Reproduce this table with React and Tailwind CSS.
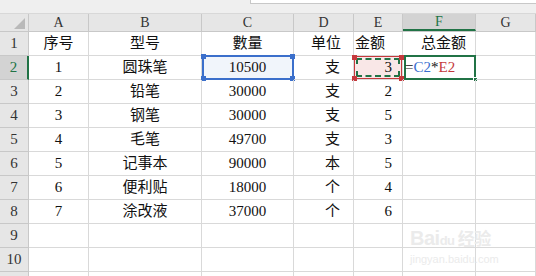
import React from "react";

const cols = [
  { key: "A", w: "w-[60px]" },
  { key: "B", w: "w-[113px]" },
  { key: "C", w: "w-[92px]" },
  { key: "D", w: "w-[60px]" },
  { key: "E", w: "w-[49px]" },
  { key: "F", w: "w-[73px]" },
  { key: "G", w: "flex-1" },
];

const rows = [
  ["序号", "型号", "數量", "单位", "金额", "总金额"],
  ["1", "圆珠笔", "10500", "支", "3", ""],
  ["2", "铅笔", "30000", "支", "2", ""],
  ["3", "钢笔", "30000", "支", "5", ""],
  ["4", "毛笔", "49700", "支", "3", ""],
  ["5", "记事本", "90000", "本", "5", ""],
  ["6", "便利贴", "18000", "个", "4", ""],
  ["7", "涂改液", "37000", "个", "6", ""],
  ["", "", "", "", "", ""],
  ["", "", "", "", "", ""],
  ["", "", "", "", "", ""],
];

// alignment per column, header row is different for D/E/F
const bodyAlign = [
  "justify-center",
  "justify-center",
  "justify-center",
  "justify-end pr-[13px]",
  "justify-end pr-[10px]",
  "justify-start pl-[2px]",
  "",
];
const headAlign = [
  "justify-center",
  "justify-center",
  "justify-center",
  "justify-center pl-[5px]",
  "justify-start pl-[1px]",
  "justify-start pl-[18px]",
  "",
];

const Corner = ({ className }) => (
  <span className={`absolute w-[5px] h-[5px] ${className}`} />
);

const Overlay = ({ col }) => {
  if (col === "C")
    return (
      <div className="absolute -top-[1px] left-0 -right-[1px] -bottom-[1px] border-2 border-[#3b6fcb] bg-[#e8eef9]/60 pointer-events-none">
        <Corner className="-top-[3px] -left-[3px] bg-[#3b6fcb]" />
        <Corner className="-top-[3px] -right-[3px] bg-[#3b6fcb]" />
        <Corner className="-bottom-[3px] -left-[3px] bg-[#3b6fcb]" />
        <Corner className="-bottom-[3px] -right-[3px] bg-[#3b6fcb]" />
      </div>
    );
  if (col === "E")
    return (
      <div className="absolute inset-0 border border-[#c5393d] bg-[#f9e7e7] pointer-events-none">
        <div className="absolute inset-[1px] border-2 border-dashed border-[#217346]" />
        <Corner className="-top-[2px] -left-[3px] bg-[#c5393d]" />
        <Corner className="-top-[2px] -right-[3px] bg-[#c5393d]" />
        <Corner className="-bottom-[3px] -left-[3px] bg-[#c5393d]" />
        <Corner className="-bottom-[3px] -right-[3px] bg-[#c5393d]" />
      </div>
    );
  if (col === "F")
    return (
      <div className="absolute -top-[1px] left-[1px] -right-[1px] -bottom-[1px] border-2 border-[#217346] pointer-events-none">
        <span className="absolute -bottom-[4px] -right-[4px] w-[5px] h-[5px] bg-[#217346] border border-white" />
      </div>
    );
  return null;
};

export default function App() {
  return (
    <div className="w-[536px] h-[276px] overflow-hidden bg-white font-['Liberation_Serif','Noto_Sans_CJK_SC',serif] text-[#111] relative">
      {/* strip under the formula bar */}
      <div className="h-[14px] bg-[#efefef] border-b border-[#d8d8d8] flex">
        <div className="w-[250px]" />
        <div className="flex-1 h-[4px] bg-white border-l border-b border-[#c8c8c8]" />
      </div>

      {/* column headers */}
      <div className="flex h-[18px] bg-[#e6e6e6] border-b border-[#c8c8c8] text-[14px] text-[#333]">
        <div className="w-[29px] border-r border-[#c8c8c8] relative">
          <span className="absolute right-[3px] bottom-[2px] w-0 h-0 border-l-[11px] border-l-transparent border-b-[11px] border-b-[#b9b9b9]" />
        </div>
        {cols.map((c) => (
          <div
            key={c.key}
            className={`${c.w} flex items-center justify-center border-r border-[#c8c8c8] ${
              c.key === "F"
                ? "bg-[#d3d3d3] text-[#217346] border-b-2 border-b-[#217346]"
                : ""
            }`}
          >
            {c.key}
          </div>
        ))}
      </div>

      {rows.map((r, i) => {
        const n = i + 1;
        const active = n === 2;
        return (
          <div key={n} className="flex h-[24px] text-[15px]">
            <div
              className={`w-[29px] flex items-end justify-center pb-[1px] border-b border-[#c8c8c8] text-[#333] ${
                active
                  ? "bg-[#d3d3d3] text-[#217346] border-r-2 border-r-[#217346]"
                  : "bg-[#e6e6e6] border-r border-[#c8c8c8]"
              }`}
            >
              {n <= 10 ? n : ""}
            </div>
            {cols.map((c, j) => (
              <div
                key={c.key}
                className={`${c.w} relative flex items-center border-r border-b border-[#d9d9d9] ${
                  n === 1 ? headAlign[j] : bodyAlign[j]
                }`}
              >
                {active && <Overlay col={c.key} />}
                <span className="relative whitespace-nowrap">
                  {active && c.key === "F" ? (
                    <>
                      =<span className="text-[#3a6fd0]">C2</span>*
                      <span className="text-[#c5393d]">E2</span>
                    </>
                  ) : (
                    r[j] || ""
                  )}
                </span>
              </div>
            ))}
          </div>
        );
      })}

      {/* faint watermark */}
      <div className="absolute left-[410px] top-[228px] text-[#ebebeb] font-['Liberation_Sans',sans-serif] leading-none pointer-events-none">
        <div className="text-[20px] font-bold tracking-tight">
          Bai<span className="text-[13px]">du</span>
          <span className="font-['Noto_Sans_CJK_SC',sans-serif] text-[17px]"> 经验</span>
        </div>
        <div className="text-[11px] mt-[6px]">jingyan.baidu.com</div>
      </div>
    </div>
  );
}
